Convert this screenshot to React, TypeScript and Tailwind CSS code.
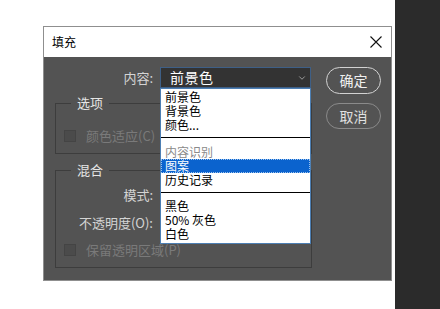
import { ChevronDown } from 'lucide-react'

const font = { fontFamily: '"Noto Sans CJK SC", "Noto Sans", sans-serif' }

function Checkbox() {
  return <span className="h-[12px] w-[12px] shrink-0 border border-[#444] bg-[#4b4b4b]" />
}

function Item({ label, muted, active }: { label: string; muted?: boolean; active?: boolean }) {
  const tone = active
    ? 'bg-[#0b63ce] text-white outline-1 outline-dotted -outline-offset-1 outline-[#9cc3ee]'
    : muted
      ? 'text-[#8a8a8a]'
      : 'text-black'
  return <div className={`h-[14px] pl-[4px] text-[12px] leading-[14px] ${tone}`}>{label}</div>
}

export default function App() {
  return (
    <div className="flex h-[309px] w-[440px] bg-white" style={font}>
      <div className="flex-1 pl-[43px] pt-[26px]">
        <div className="flex h-[255px] w-[349px] flex-col border border-[#8f8f8f]">
          <div className="flex h-[30px] items-center justify-between bg-white pl-[8px] pr-[9px]">
            <span className="text-[12px] text-black">填充</span>
            <svg width="12" height="12" viewBox="0 0 12 12">
              <path d="M0.5 0.5 L11.5 11.5 M11.5 0.5 L0.5 11.5" stroke="#111" strokeWidth="1.1" />
            </svg>
          </div>

          <div className="relative flex flex-1 bg-[#535353] pl-[11px]">
            <div className="w-[257px]">
              <div className="mt-[10px] flex h-[21px] items-center">
                <span className="w-[98px] text-right text-[13px] text-[#d4d4d4]">内容:</span>
                <div className="ml-[7px] flex h-[21px] w-[151px] items-center justify-between border border-[#3e5f86] bg-[#333] pl-[9px] pr-[3px]">
                  <span className="text-[14px] tracking-[0.5px] text-white">前景色</span>
                  <ChevronDown className="h-[10px] w-[10px] text-[#cfcfcf]" strokeWidth={1.6} />
                </div>
              </div>

              <fieldset className="mt-[6px] border border-[#3d3d3d] pb-[7px]">
                <legend className="ml-[15px] px-[6px] text-[13px] leading-[18px] text-[#e6e6e6]">选项</legend>
                <div className="mt-[14px] flex h-[20px] items-center pl-[8px]">
                  <Checkbox />
                  <span className="ml-[10px] text-[13px] text-[#7a7a7a]">颜色适应(C)</span>
                </div>
              </fieldset>

              <fieldset className="mt-[7px] border border-[#3d3d3d] pb-[7px]">
                <legend className="ml-[15px] px-[6px] text-[13px] leading-[18px] text-[#e6e6e6]">混合</legend>
                <div className="mt-[6px] flex h-[20px] items-center">
                  <span className="w-[97px] text-right text-[13px] text-[#d4d4d4]">模式:</span>
                </div>
                <div className="mt-[8px] flex h-[20px] items-center">
                  <span className="w-[97px] text-right text-[13px] text-[#d4d4d4]">不透明度(O):</span>
                </div>
                <div className="mt-[7px] flex h-[20px] items-center pl-[8px]">
                  <Checkbox />
                  <span className="ml-[10px] text-[13px] text-[#7a7a7a]">保留透明区域(P)</span>
                </div>
              </fieldset>
            </div>

            <div className="ml-[14px] mt-[10px] flex w-[55px] flex-col">
              <button className="h-[27px] rounded-full border-[1.5px] border-[#d2d2d2] text-[14px] text-[#f0f0f0]">
                确定
              </button>
              <button className="mt-[9px] h-[26px] rounded-full border-[1.5px] border-[#8a8a8a] text-[14px] text-[#e0e0e0]">
                取消
              </button>
            </div>

            <div className="absolute left-[116px] top-[31px] h-[156px] w-[151px] border border-[#4d7fb3] bg-white pt-[1px]">
              <Item label="前景色" />
              <Item label="背景色" />
              <Item label="颜色..." />
              <div className="mt-[5px] h-px bg-black" />
              <div className="h-[7px]" />
              <Item label="内容识别" muted />
              <Item label="图案" active />
              <Item label="历史记录" />
              <div className="mt-[5px] h-px bg-black" />
              <div className="h-[6px]" />
              <Item label="黑色" />
              <Item label="50% 灰色" />
              <Item label="白色" />
            </div>
          </div>
        </div>
      </div>
      <div className="w-[45px] bg-[#2b2b2b]" />
    </div>
  )
}
